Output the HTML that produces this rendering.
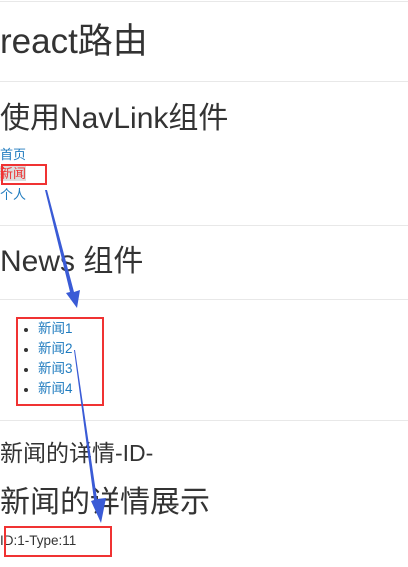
<!DOCTYPE html>
<html><head><meta charset="utf-8"><style>
html,body{margin:0;padding:0;width:408px;height:567px;overflow:hidden;background:#fff;}
body{font-family:"Liberation Sans","Noto Sans CJK SC",sans-serif;color:#333;position:relative;}
.t{position:absolute;left:0;white-space:nowrap;line-height:1;}
.hr{position:absolute;left:0;width:408px;height:1px;background:#e8e8e8;}
a{color:#1f7bbf;text-decoration:none;}
.box{position:absolute;border:2px solid #f03232;box-sizing:border-box;}
</style></head><body>
<div class="hr" style="top:1px"></div>
<div class="t" style="top:24px;font-size:35px">react路由</div>
<div class="hr" style="top:81px"></div>
<div class="t" style="top:104px;font-size:30px">使用NavLink组件</div>
<div class="t" style="top:148px;font-size:13px"><a>首页</a></div>
<div class="t" style="top:167px;font-size:13px"><a style="color:#e33;background:#ddd">新闻</a></div>
<div class="t" style="top:188px;font-size:13px"><a>个人</a></div>
<div class="box" style="left:1px;top:164px;width:46px;height:21px"></div>
<div class="hr" style="top:225px"></div>
<div class="t" style="top:247px;font-size:30px">News 组件</div>
<div class="hr" style="top:299px"></div>
<div class="t" style="top:322px;left:38px;font-size:13.5px"><a>新闻1</a></div>
<div class="t" style="top:342px;left:38px;font-size:13.5px"><a>新闻2</a></div>
<div class="t" style="top:362px;left:38px;font-size:13.5px"><a>新闻3</a></div>
<div class="t" style="top:382px;left:38px;font-size:13.5px"><a>新闻4</a></div>
<div style="position:absolute;left:24px;top:328px;width:4px;height:4px;border-radius:50%;background:#333"></div>
<div style="position:absolute;left:24px;top:348px;width:4px;height:4px;border-radius:50%;background:#333"></div>
<div style="position:absolute;left:24px;top:368px;width:4px;height:4px;border-radius:50%;background:#333"></div>
<div style="position:absolute;left:24px;top:388px;width:4px;height:4px;border-radius:50%;background:#333"></div>
<div class="box" style="left:16px;top:317px;width:88px;height:89px"></div>
<div class="hr" style="top:420px"></div>
<div class="t" style="top:442px;font-size:23px">新闻的详情-ID-</div>
<div class="t" style="top:488px;font-size:30px">新闻的详情展示</div>
<div class="t" style="top:534px;left:0;font-size:13.5px">ID:1-Type:11</div>
<div class="box" style="left:4px;top:526px;width:108px;height:31px"></div>
<svg style="position:absolute;left:0;top:0" width="408" height="567">
<polygon points="45,190 47,190 74,292 80,290 77,308 66,293 70,292" fill="#3a5bd6"/>
<polygon points="74,350 75,350 97,499 106,498 101,523 91,501 94,500" fill="#3a5bd6"/>
</svg>
</body></html>
